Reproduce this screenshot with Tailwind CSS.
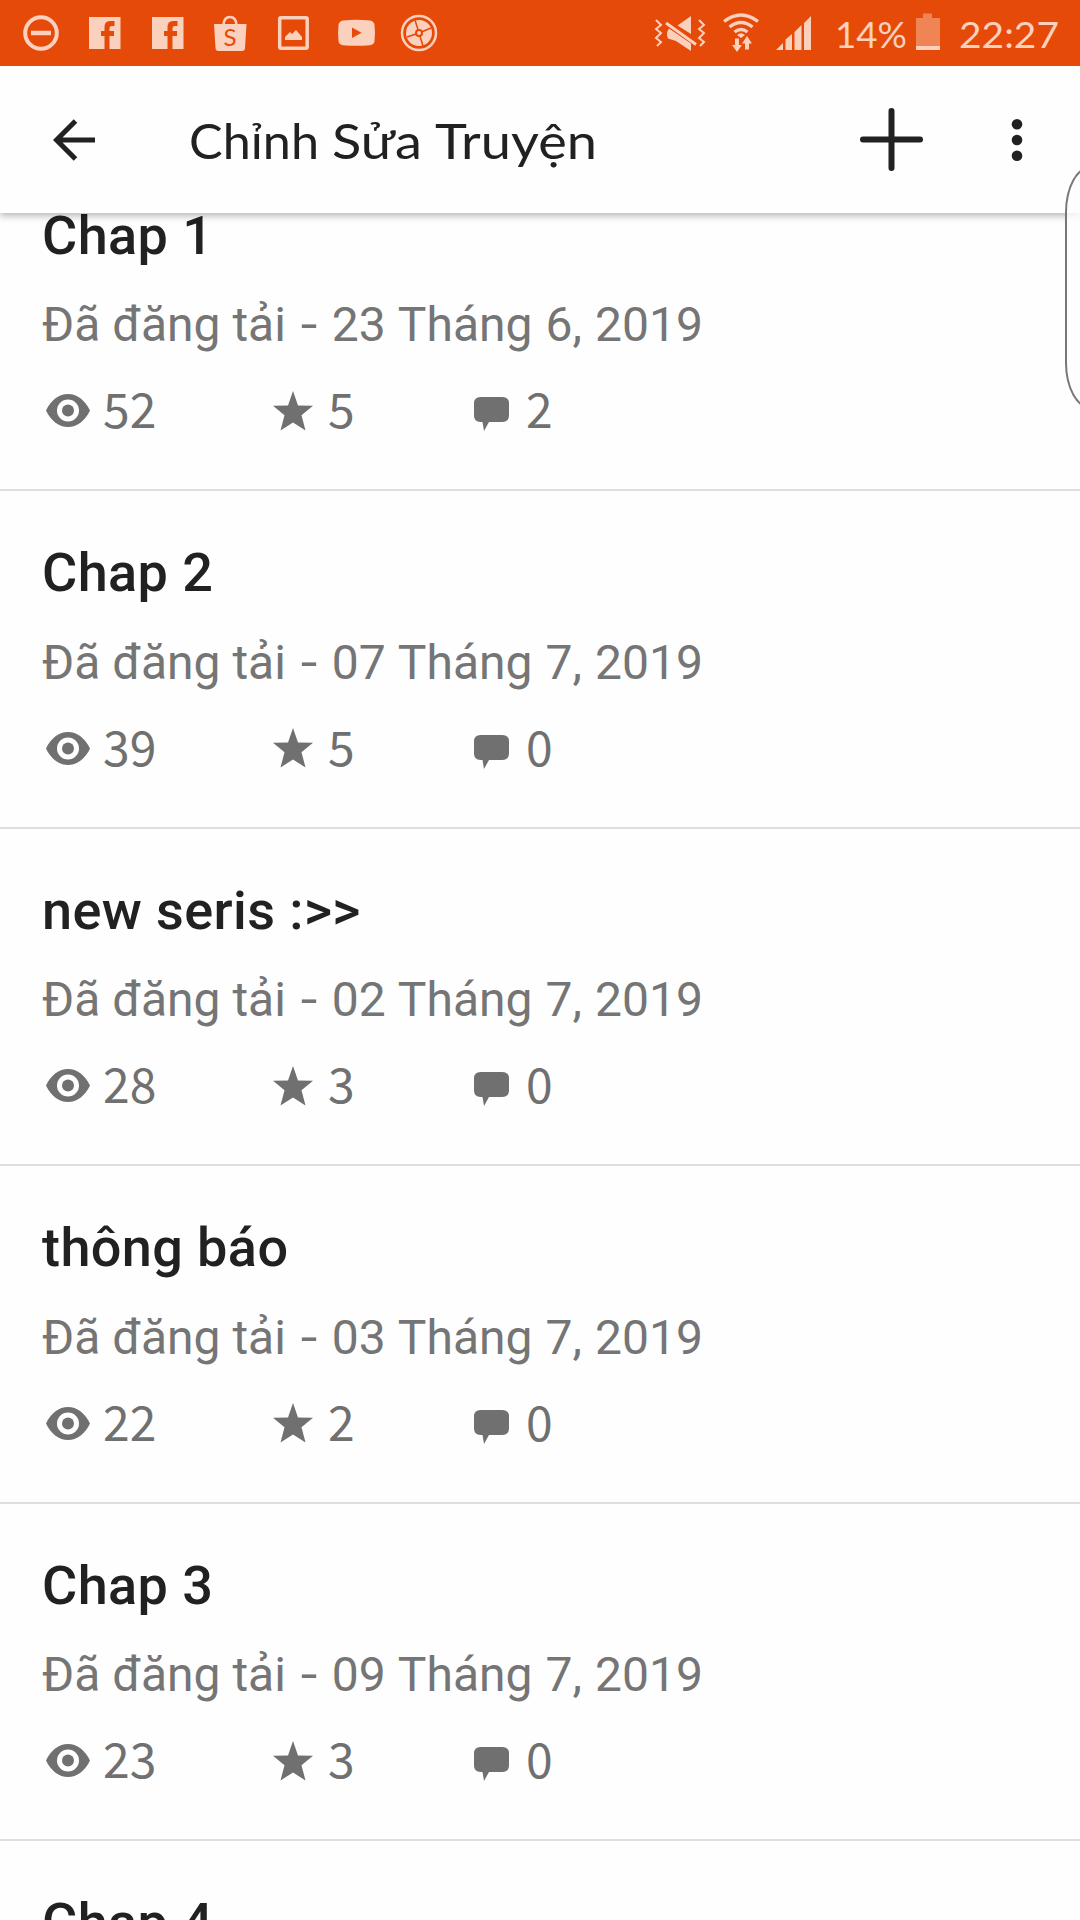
<!DOCTYPE html>
<html lang="vi">
<head>
<meta charset="utf-8">
<title>Chỉnh Sửa Truyện</title>
<script src="https://cdn.jsdelivr.net/npm/@tailwindcss/browser@4"></script>
</head>
<body class="bg-[#fefefe]">
<svg class="hidden">
  <symbol id="eye" viewBox="0 0 44 33"><path fill="currentColor" fill-rule="evenodd" d="M0 16.500C5 6 13 0 22 0S39 6 44 16.500C39 27 31 33 22 33S5 27 0 16.500ZM22 5.500a11 11 0 1 0 0 22a11 11 0 1 0 0-22Z"/><circle cx="22" cy="16.500" r="6" fill="currentColor"/></symbol>
  <symbol id="star" viewBox="0 0 40 40"><path fill="currentColor" d="M20 0L25 14.500L40 14.800L28.500 24.200L32.500 39.500L20 31.500L7.500 39.500L11.500 24.200L0 14.800L15 14.500Z"/></symbol>
  <symbol id="bubble" viewBox="0 0 35 34"><path fill="currentColor" d="M6.500 0H28.500Q35 0 35 6.500V18.500Q35 25 28.500 25H15L10 34L8.500 25H6.500Q0 25 0 18.500V6.500Q0 0 6.500 0Z"/></symbol>
</svg>
<div class="relative flex h-[1920px] w-[1080px] flex-col overflow-hidden bg-[#fefefe] font-['Roboto',sans-serif]">
  <div class="z-20 flex h-[66px] shrink-0 bg-[#e64a09] text-[#fbd0bd]">
    <svg class="h-[66px] w-[460px]" viewBox="0 0 460 66" fill="none">
      <circle cx="41" cy="33" r="15.800" stroke="currentColor" stroke-width="4"/><path d="M31 33H51" stroke="currentColor" stroke-width="4.500"/>
      <g id="fb"><path fill="currentColor" d="M89 17H120.500V49H109.500V36H114V31H109.500V28Q109.500 26 112 26H114.500V21H110Q104.500 21 104.500 27V31H101V36H104.500V49H89Z"/></g>
      <use href="#fb" x="63"/>
      <path d="M223.500 25Q224 17 230 17T236.500 25" stroke="currentColor" stroke-width="2.500"/><path fill="currentColor" d="M214 24H246.500L245 48Q245 51 242 51H218.500Q215.500 51 215.500 48Z"/>
      <text x="230" y="45.800" text-anchor="middle" class="fill-[#e64a09] font-['Lato',sans-serif] text-[24px]">S</text>
      <rect x="279.700" y="17.700" width="27.500" height="30.500" rx="1.500" stroke="currentColor" stroke-width="3.500"/><path fill="currentColor" d="M285 40V37L290 32L292 34L296 30L302 37V40Z"/>
      <path fill="currentColor" fill-rule="evenodd" d="M343 20.500Q356 19 370 20.500Q374 21 374.500 25Q375.500 33 374.500 41Q374 45 370 45.200Q356 46.500 343 45.200Q339 45 338.500 41Q337.500 33 338.500 25Q339 21 343 20.500ZM352 27.500V38L361.500 32.700Z"/>
      <circle cx="419" cy="33" r="17" stroke="currentColor" stroke-width="2.500"/><circle cx="419" cy="33" r="13" fill="currentColor"/>
      <path class="stroke-[#e64a09]" stroke-width="1.500" d="M419 33L415 20M419 33L431 28M419 33L423 46M419 33L407 37"/><circle class="fill-[#e64a09]" cx="419" cy="33" r="4"/><circle cx="419" cy="33" r="2" fill="currentColor"/>
    </svg>
    <svg class="ml-[160px] h-[66px] w-[460px]" viewBox="620 0 460 66" fill="none">
      <path d="M656 20L661 25L656 29L661 33L656 38L661 42L657 46M699 20L704 25L699 29L704 33L699 38L704 42L700 46" stroke="currentColor" stroke-width="2"/>
      <path fill="currentColor" d="M691 16V34L677.500 25.500ZM669 28.500L691 43.500V51L676 41L668 38.500Q665.500 33 669 28.500Z"/><path d="M666 23L696 44.500" stroke="currentColor" stroke-width="2.800"/>
      <path d="M724 21.500Q741 8.500 758 21.500M729.500 27Q741 18 752.500 27M734.500 32Q741 27 747.500 32" stroke="currentColor" stroke-width="3.300"/>
      <path fill="currentColor" d="M737 35Q741 31.500 745 35L741 38ZM735 38.500H739V45H742L737 52L732 45H735ZM745 49.500H749V43.500H752L747 36L742 43.500H745Z"/>
      <path fill="currentColor" d="M776 50L783 43V50ZM785.500 50V39.500L792 34V50ZM794.500 50V32L801.500 25V50ZM804 50V23L811 16V50Z"/>
      <text x="835" y="48" textLength="72" lengthAdjust="spacingAndGlyphs" fill="currentColor" class="font-['Lato',sans-serif] text-[37px]">14%</text>
      <path class="fill-[#f08455]" d="M916 18H923V13.500H932V18H940V50H916Z"/><path fill="currentColor" d="M916 46H940V50H916Z"/>
      <text x="959" y="48" textLength="100" lengthAdjust="spacingAndGlyphs" fill="currentColor" class="font-['Lato',sans-serif] text-[37px]">22:27</text>
    </svg>
  </div>
  <header class="z-10 flex h-[147px] shrink-0 items-center bg-[#fefefe] text-[#212121] shadow-[0_3px_7px_0_rgba(0,0,0,0.28)]">
    <svg class="ml-[53px] h-[42px] w-[42px]" viewBox="0 0 42 42" fill="none" stroke="currentColor" stroke-width="5"><path d="M42 21H4M22.500 2L3.500 21L22.500 40"/></svg>
    <svg class="ml-[94px] h-[80px] w-[420px]" viewBox="0 0 420 80" fill="currentColor">
      <g class="font-['Lato',sans-serif] text-[49px]">
        <text x="0" y="58.500" textLength="130" lengthAdjust="spacingAndGlyphs">Chỉnh</text>
        <text x="143" y="58.500" textLength="90" lengthAdjust="spacingAndGlyphs">Sửa</text>
        <text x="246" y="58.500" textLength="162" lengthAdjust="spacingAndGlyphs">Truyện</text>
      </g>
    </svg>
    <svg class="ml-[250.500px] h-[63px] w-[63px]" viewBox="0 0 63 63" stroke="currentColor" stroke-width="6" stroke-linecap="round"><path d="M3 31.500H60M31.500 3V60"/></svg>
    <svg class="ml-[89.500px] h-[44px] w-[10px] overflow-visible" viewBox="0 0 10 44" fill="currentColor"><circle cx="5" cy="6.300" r="5.300"/><circle cx="5" cy="22" r="5.300"/><circle cx="5" cy="37.700" r="5.300"/></svg>
  </header>
  <main id="list" class="-mt-[59.5px]"></main>
  <div class="absolute top-[166px] left-[1064.500px] z-30 h-[243px] w-[60px] rounded-[26px/46px] border-2 border-[#777] bg-[#fefefe]/80"></div>
</div>
<script>
const rows = [['Chap 1','23','Tháng 6',52,5,2],['Chap 2','07','Tháng 7',39,5,0],['new seris :&gt;&gt;','02','Tháng 7',28,3,0],['thông báo','03','Tháng 7',22,2,0],['Chap 3','09','Tháng 7',23,3,0]];
const title = t => `<h2 class="h-[64px] text-[54px] leading-[64px] font-medium tracking-[0.4px] text-[#212121]">${t}</h2>`;
document.getElementById('list').innerHTML = rows.map(([t,d,m,v,s,c]) => `
<section class="h-[337.5px] border-b-2 border-[#dedede] px-[42px] pt-[50px]">
  ${title(t)}
  <p class="mt-[29.5px] h-[56px] text-[48px] leading-[56px] whitespace-nowrap text-[#757575]">Đã đăng tải <span class="inline-block w-[22px] scale-x-125 text-center">-</span> <span class="[word-spacing:1.2px]">${d} ${m}, 2019</span></p>
  <div class="mt-[29.5px] flex h-[56px] items-center font-['Noto_Sans_CJK_SC',sans-serif] text-[48px] leading-[56px] text-[#707070]">
    <div class="flex w-[231px] items-center pl-[4px]"><svg class="h-[33px] w-[44px]"><use href="#eye"/></svg><span class="-mt-[7px] ml-[13px]">${v}</span></div>
    <div class="flex w-[201px] items-center"><svg class="h-[40px] w-[40px]"><use href="#star"/></svg><span class="-mt-[7px] ml-[15px]">${s}</span></div>
    <div class="flex items-center"><svg class="mt-[7px] h-[34px] w-[35px]"><use href="#bubble"/></svg><span class="-mt-[7px] ml-[17px]">${c}</span></div>
  </div>
</section>`).join('') + `<section class="px-[42px] pt-[50px]">${title('Chap 4')}</section>`;
</script>
</body>
</html>
